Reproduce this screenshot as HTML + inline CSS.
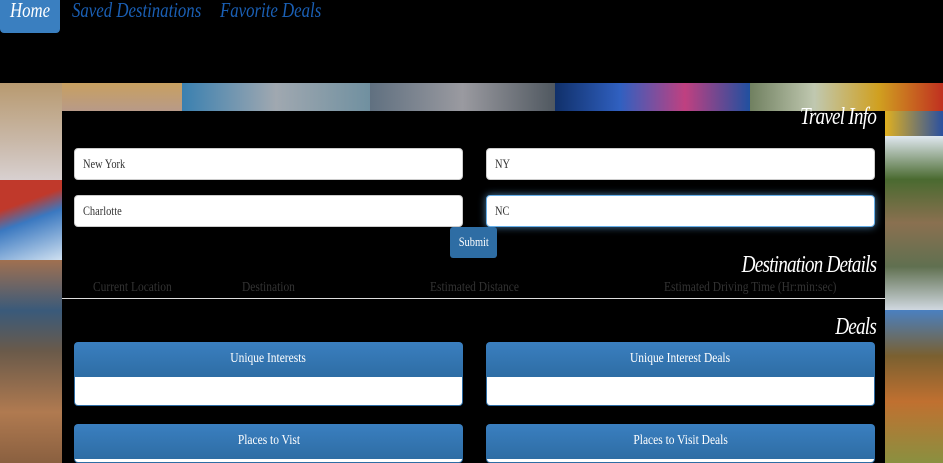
<!DOCTYPE html>
<html style="width:943px;height:463px;overflow:hidden"><head><style>
*{margin:0;padding:0;box-sizing:border-box}
body{width:943px;height:463px;background:#000;position:relative;overflow:hidden;font-family:"Liberation Serif",serif}
.a{position:absolute}
.s{display:inline-block;transform:scaleX(.8);transform-origin:left}
.nav{font-family:"Liberation Serif",serif;font-style:italic;font-size:21px;color:#1a5fb4;top:-2px;white-space:nowrap}
.inp{position:absolute;background:#fff;border:1px solid #ccc;border-radius:4px;height:32px;width:389px;font-size:13px;color:#333;padding:7px 8px}
.h{position:absolute;right:67px;color:#fff;font-style:italic;font-size:24px;letter-spacing:-1px;transform:scaleX(.8);transform-origin:right;white-space:nowrap}
.th{position:absolute;top:280px;color:#333;font-size:14px;white-space:nowrap;transform:scaleX(.82);transform-origin:left}
.ph{position:absolute;background:linear-gradient(#3a7fc0,#2e6da4);color:#fff;font-size:14px;text-align:center;border-radius:4px 4px 0 0;height:35px;line-height:34px}
.ph span{display:inline-block;transform:scaleX(.82)}
.pb{position:absolute;background:#fff;height:29px;border:1px solid #2e6da4;border-top:none;border-radius:0 0 4px 4px}
</style></head><body>
<div class="a" style="left:0;top:0;width:60px;height:33px;background:#3a7fc0;border-radius:0 0 4px 4px"></div>
<div class="a nav" style="left:10px;color:#fff"><span class="s">Home</span></div>
<div class="a nav" style="left:72px"><span class="s">Saved Destinations</span></div>
<div class="a nav" style="left:220px"><span class="s">Favorite Deals</span></div>

<div class="a" style="left:0;top:83px;width:62px;height:97px;background:linear-gradient(#b89a70,#c9b8a8 60%,#d8d0d0)"></div>
<div class="a" style="left:0;top:180px;width:62px;height:80px;background:linear-gradient(160deg,#c0392b 30%,#3a78c0 50%,#cfe0f0)"></div>
<div class="a" style="left:0;top:260px;width:62px;height:203px;background:linear-gradient(#a07050,#3a5a7a 25%,#6a5a4a 45%,#b07a50 75%,#8a6040)"></div>
<div class="a" style="left:62px;top:83px;width:120px;height:28px;background:linear-gradient(#c8a060,#b89a88)"></div>
<div class="a" style="left:182px;top:83px;width:188px;height:28px;background:linear-gradient(90deg,#3a80b0,#a0a8b0,#7090a0)"></div>
<div class="a" style="left:370px;top:83px;width:185px;height:28px;background:linear-gradient(90deg,#607080,#9a9aa0,#505860)"></div>
<div class="a" style="left:555px;top:83px;width:195px;height:28px;background:linear-gradient(90deg,#10306a,#3060c0,#c04080,#2050a0)"></div>
<div class="a" style="left:750px;top:83px;width:193px;height:28px;background:linear-gradient(90deg,#708060,#c0c8b0,#d0a020,#c03020)"></div>
<div class="a" style="left:885px;top:111px;width:58px;height:25px;background:linear-gradient(90deg,#e0b020,#2a50a0)"></div>
<div class="a" style="left:885px;top:136px;width:58px;height:174px;background:linear-gradient(#e0e8f0,#4a6a30 25%,#8a7050 50%,#607050 75%,#d0d8e0)"></div>
<div class="a" style="left:885px;top:310px;width:58px;height:153px;background:linear-gradient(#4a80c0,#7a6030 30%,#c07030 60%,#8a9040)"></div>

<div class="a" style="left:62px;top:111px;width:823px;height:352px;background:#000"></div>
<div class="h" style="top:104px">Travel Info</div>
<div class="inp" style="left:74px;top:148px"><span class="s">New York</span></div>
<div class="inp" style="left:486px;top:148px"><span class="s">NY</span></div>
<div class="inp" style="left:74px;top:195px"><span class="s">Charlotte</span></div>
<div class="inp" style="left:486px;top:195px;border-color:#66afe9;box-shadow:0 0 8px rgba(102,175,233,.7)"><span class="s">NC</span></div>
<div class="a" style="left:450px;top:227px;width:47px;height:31px;background:#2e6da4;border-radius:3px;color:#fff;font-size:13px;text-align:center;line-height:29px"><span style="display:inline-block;transform:scaleX(.8)">Submit</span></div>
<div class="h" style="top:252px">Destination Details</div>
<div class="th" style="left:93px">Current Location</div>
<div class="th" style="left:242px">Destination</div>
<div class="th" style="left:430px">Estimated Distance</div>
<div class="th" style="left:664px">Estimated Driving Time (Hr:min:sec)</div>
<div class="a" style="left:62px;top:298px;width:823px;height:1px;background:#ddd"></div>
<div class="h" style="top:314px">Deals</div>
<div class="ph" style="left:74px;top:342px;width:389px"><span>Unique Interests</span></div>
<div class="pb" style="left:74px;top:377px;width:389px"></div>
<div class="ph" style="left:486px;top:342px;width:389px"><span>Unique Interest Deals</span></div>
<div class="pb" style="left:486px;top:377px;width:389px"></div>
<div class="ph" style="left:74px;top:424px;width:389px"><span>Places to Vist</span></div>
<div class="pb" style="left:74px;top:459px;width:389px;height:4px"></div>
<div class="ph" style="left:486px;top:424px;width:389px"><span>Places to Visit Deals</span></div>
<div class="pb" style="left:486px;top:459px;width:389px;height:4px"></div>
</body></html>
